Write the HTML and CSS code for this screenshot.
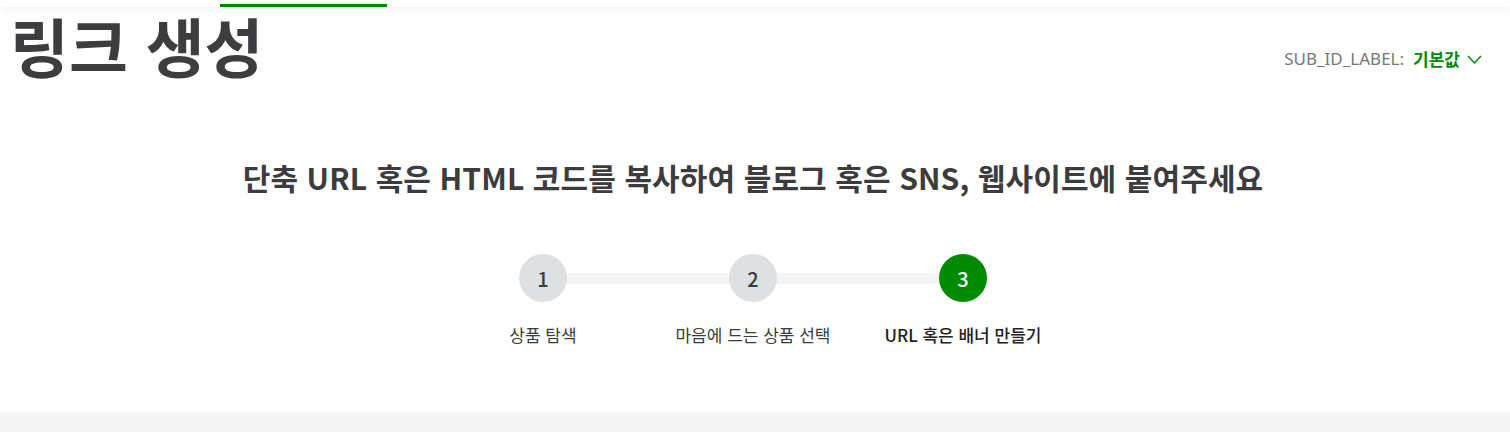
FILE: index.html
```html
<!DOCTYPE html>
<html lang="ko">
<head>
    <meta charset="utf-8">
    <title>링크 생성</title>
    <link rel="stylesheet" href="styles.css">
</head>
<body>

<div class="topbar">
    <span class="topbar-tab"></span>
</div>

<div class="page">
    <div class="title-row">
        <h1>링크 생성</h1>
        <div class="sub-id">
            <span class="sub-id-label">SUB_ID_LABEL:</span>
            <span class="sub-id-value">기본값</span>
            <svg class="chevron" width="15" height="9" viewBox="0 0 15 9"><path d="M1 1 L7.5 8 L14 1" fill="none" stroke="#008a00" stroke-width="1.4"/></svg>
        </div>
    </div>

    <h2>단축 URL 혹은 HTML 코드를 복사하여 블로그 혹은 SNS, 웹사이트에 붙여주세요</h2>

    <div class="steps">
        <div class="step">
            <div class="circle">1</div>
            <div class="step-name">상품 탐색</div>
        </div>
        <div class="step">
            <div class="circle">2</div>
            <div class="step-name">마음에 드는 상품 선택</div>
        </div>
        <div class="step active">
            <div class="circle">3</div>
            <div class="step-name">URL 혹은 배너 만들기</div>
        </div>
    </div>
</div>

<div class="footer-band"></div>

</body>
</html>
```

FILE: styles.css
```css
body {
    font-family: "Noto Sans CJK KR", "Noto Sans", sans-serif;
    margin: 0;
    padding: 0;
    background-color: #fff;
    color: #3c3c3e;
}
.topbar {
    height: 7px;
    background-color: #fff;
    box-shadow: 0 2px 8px rgba(0, 0, 0, 0.07);
    position: relative;
    z-index: 1;
}
.topbar-tab {
    display: block;
    margin-left: 220px;
    width: 167px;
    height: 3px;
    padding-top: 4px;
    background-color: #008a00;
    background-clip: content-box;
}
.page {
    height: 405px;
}
.title-row {
    display: flex;
    justify-content: space-between;
    align-items: flex-start;
    padding: 0 28px 0 10px;
}
h1 {
    margin: 0;
    font-size: 64px;
    line-height: 74px;
    font-weight: 700;
    color: #3d3d3f;
}
.sub-id {
    display: flex;
    align-items: center;
    margin-top: 39px;
    font-size: 17px;
}
.sub-id-label {
    font-family: "Noto Sans", sans-serif;
    color: #777;
    margin-right: 9px;
}
.sub-id-value {
    color: #008a00;
    font-weight: 700;
    margin-right: 7px;
}
.chevron {
    margin-top: 2px;
}
h2 {
    margin: 75px 0 0;
    padding-right: 4px;
    text-align: center;
    font-size: 30px;
    font-weight: 700;
    line-height: 42px;
    letter-spacing: 0.1px;
}
.steps {
    display: flex;
    justify-content: center;
    margin-top: 56px;
    padding-right: 4px;
}
.step {
    width: 210px;
    display: flex;
    flex-direction: column;
    align-items: center;
    position: relative;
}
.step::before {
    content: "";
    position: absolute;
    top: 19px;
    left: 50%;
    width: 210px;
    height: 11px;
    background-color: #f4f4f4;
}
.step:last-child::before {
    display: none;
}
.circle {
    width: 48px;
    height: 48px;
    border-radius: 50%;
    background-color: #dfe0e2;
    display: flex;
    align-items: center;
    justify-content: center;
    font-size: 20px;
    font-weight: 500;
    color: #3c3c3e;
    position: relative;
}
.step-name {
    margin-top: 20px;
    font-size: 17px;
    color: #3c3c3e;
}
.active .circle {
    background-color: #008a00;
    color: #fff;
}
.active .step-name {
    font-weight: 500;
    color: #222;
}
.footer-band {
    height: 20px;
    background-color: #f5f5f5;
}
```
